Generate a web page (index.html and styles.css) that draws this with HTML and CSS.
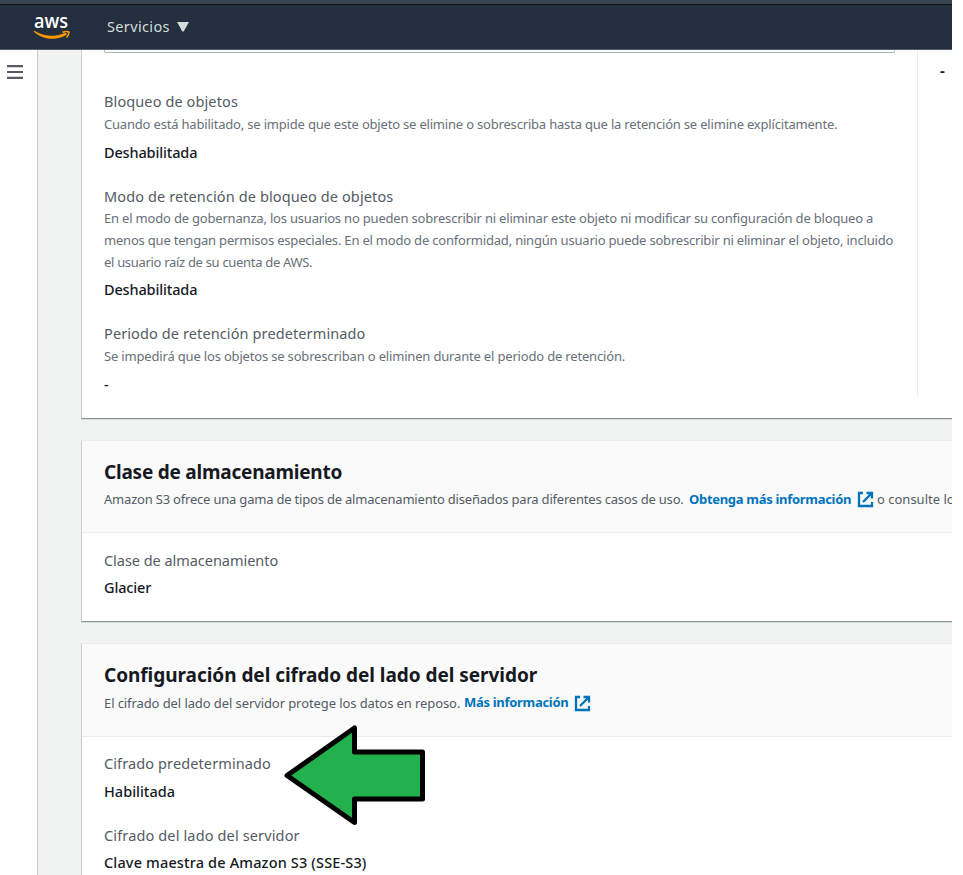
FILE: index.html
```html
<!DOCTYPE html>
<html lang="es">
<head>
<meta charset="utf-8">
<title>Amazon S3</title>
<link rel="stylesheet" href="styles.css">
</head>
<body>
<div class="console">
  <header class="topbar">
    <svg class="logo" width="40" height="36" viewBox="0 -4 40 36">
      <text class="logo-text" x="1" y="15" textLength="34" lengthAdjust="spacingAndGlyphs">aws</text>
      <path d="M1 18.500C10 27 24 27.500 33.500 21.500L32.500 20C23 24.500 11 24.300 1.300 18Z" fill="#ff9900" stroke="#ff9900" stroke-width=".6"/>
      <path d="M29.500 19.200Q34 17.800 36 19Q36 22 33.500 24.500" fill="none" stroke="#ff9900" stroke-width="1.600"/>
    </svg>
    <span class="services">Servicios</span>
    <svg class="caret" width="12" height="10" viewBox="0 0 12 10"><path d="M0 0H12L6.700 9.500H5.300Z" fill="#d5dbdb"/></svg>
  </header>
  <div class="body">
    <nav class="rail">
      <svg width="16" height="14" viewBox="0 0 16 14"><path d="M0 1.200H16M0 7H16M0 12.800H16" stroke="#545b64" stroke-width="2.200"/></svg>
    </nav>
    <main class="main">
      <section class="card lock-card">
        <div class="lock-col">
          <div class="field-end"></div>
          <div class="label l1">Bloqueo de objetos</div>
          <div class="desc d1">Cuando está habilitado, se impide que este objeto se elimine o sobrescriba hasta que la retención se elimine explícitamente.</div>
          <div class="value v1">Deshabilitada</div>
          <div class="label l2">Modo de retención de bloqueo de objetos</div>
          <div class="desc d2">En el modo de gobernanza, los usuarios no pueden sobrescribir ni eliminar este objeto ni modificar su configuración de bloqueo a</div>
          <div class="desc d3">menos que tengan permisos especiales. En el modo de conformidad, ningún usuario puede sobrescribir ni eliminar el objeto, incluido</div>
          <div class="desc d4">el usuario raíz de su cuenta de AWS.</div>
          <div class="value v2">Deshabilitada</div>
          <div class="label l3">Periodo de retención predeterminado</div>
          <div class="desc d5">Se impedirá que los objetos se sobrescriban o eliminen durante el periodo de retención.</div>
          <div class="value v3">-</div>
        </div>
        <div class="side-col">-</div>
      </section>
      <section class="card storage-card">
        <div class="card-head">
          <h2 class="t1">Clase de almacenamiento</h2>
          <p class="row"><span class="s1">Amazon S3 ofrece una gama de tipos de almacenamiento diseñados para diferentes casos de uso.</span><a class="k1">Obtenga más información</a><svg class="ext" width="17" height="17" viewBox="0 0 17 17"><path d="M6 2H2V15H15V11M9.500 2H15V7.500M14.500 2.500L6 11" fill="none" stroke="#0073bb" stroke-width="2.300"/></svg><span class="s2">o consulte los</span></p>
        </div>
        <div class="label l4">Clase de almacenamiento</div>
        <div class="value v4">Glacier</div>
      </section>
      <section class="card crypt-card">
        <div class="card-head">
          <h2 class="t2">Configuración del cifrado del lado del servidor</h2>
          <p class="row"><span class="s3">El cifrado del lado del servidor protege los datos en reposo.</span><a class="k2">Más información</a><svg class="ext" width="17" height="17" viewBox="0 0 17 17"><path d="M6 2H2V15H15V11M9.500 2H15V7.500M14.500 2.500L6 11" fill="none" stroke="#0073bb" stroke-width="2.300"/></svg></p>
        </div>
        <div class="label l5">Cifrado predeterminado</div>
        <div class="value v5">Habilitada</div>
        <div class="label l6">Cifrado del lado del servidor</div>
        <div class="value v6">Clave maestra de Amazon S3 (SSE-S3)</div>
        <svg class="arrow" width="144" height="102" viewBox="0 0 144 102"><path d="M5 51.500L72.500 4V28H140.500V75H72.500V98.500Z" fill="#22b14c" stroke="#000" stroke-width="5" stroke-linejoin="round"/></svg>
      </section>
    </main>
  </div>
</div>
</body>
</html>
```
FILE: styles.css
```css
* { box-sizing: border-box; }
body { margin: 0; background: #fff; font-family: "Noto Sans", "Open Sans", sans-serif; overflow: hidden; }
.console { width: 952px; height: 875px; overflow: hidden; display: flex; flex-direction: column; }
.topbar { height: 50px; flex: none; display: flex; align-items: center; background: #232f3e; border-top: 4px solid #38444f; border-bottom: 1px solid #545b64; box-shadow: inset 0 1px #111; padding-left: 33px; }
.logo { overflow: visible; }
.logo-text { font-family: "Open Sans", sans-serif; font-size: 20px; font-weight: 600; fill: #fff; }
.services { margin: -2px 0 0 34px; width: 64px; color: #d5dbdb; font-size: 14.5px; letter-spacing: .35px; line-height: 22px; white-space: nowrap; }
.caret { margin-left: 6px; }
.body { flex: 1; display: flex; min-height: 0; }
.rail { width: 38px; flex: none; border-right: 1px solid #c5cbcb; padding: 15px 0 0 7px; }
.rail svg { display: block; }
.main { flex: 1; min-width: 0; background: #f1f3f3; padding-left: 43px; }
.card { background: #fff; border-left: 1px solid #c8cecf; position: relative; white-space: nowrap; padding-left: 22px; }
.lock-card { height: 369px; border-bottom: 1px solid #879596; box-shadow: 0 1px #d5dbdb; display: flex; }
.lock-col { width: 814px; height: 346px; flex: none; border-right: 1px solid #eaeded; }
.field-end { width: 791px; height: 3px; border: 1px solid #aab7b8; border-top: 0; border-radius: 0 0 2px 2px; margin-bottom: 37px; }
.side-col { padding: 9px 0 0 22px; font-size: 15px; line-height: 22px; color: #16191f; font-weight: 700; }
.label { font-size: 14.5px; line-height: 22px; color: #545b64; letter-spacing: .11px; }
.desc { font-size: 13px; line-height: 22px; color: #687078; letter-spacing: -.19px; }
.value { font-size: 14.5px; line-height: 22px; color: #16191f; font-weight: 500; letter-spacing: -.15px; }
.d1 { margin-top: 1px; }
.v1 { margin-top: 6px; }
.l2 { margin-top: 22px; }
.d3 { letter-spacing: -.2px; }
.d4 { letter-spacing: -.31px; }
.v2 { margin-top: 5px; }
.l3 { margin-top: 22px; }
.d5 { margin-top: 1px; letter-spacing: -.175px; }
.v3 { margin-top: 6px; }
.card-head { height: 92px; margin-left: -22px; padding: 18px 0 0 22px; background: #fafafa; border-bottom: 1px solid #eaeded; }
.storage-card { margin-top: 21px; height: 182px; border-top: 1px solid #eaeded; border-bottom: 1px solid #879596; box-shadow: 0 1px #d5dbdb; }
.crypt-card { margin-top: 21px; height: 300px; border-top: 1px solid #eaeded; }
.crypt-card .card-head { height: 93px; }
h2 { margin: 0; font-size: 19px; line-height: 26px; font-weight: 700; color: #16191f; }
.t1 { letter-spacing: -.22px; }
.t2 { letter-spacing: -.04px; }
.row { margin: 3px 0 0; height: 22px; display: flex; align-items: center; font-size: 13px; line-height: 22px; color: #545b64; }
.crypt-card .row { margin-top: 4px; }
.row a { color: #0073bb; font-weight: 700; flex: none; letter-spacing: -.3px; }
.row span { flex: none; }
.ext { flex: none; margin-left: 6px; }
.s1 { width: 585px; letter-spacing: -.2px; }
.k1 { width: 162px; }
.s2 { margin-left: 3px; }
.s3 { width: 360px; letter-spacing: -.09px; }
.k2 { width: 104px; position: relative; top: -1px; }
.l4 { margin-top: 16px; letter-spacing: -.04px; }
.v4 { margin-top: 5px; }
.l5 { margin-top: 15px; }
.v5 { margin-top: 6px; letter-spacing: 0; }
.l6 { margin-top: 22px; letter-spacing: .14px; }
.v6 { margin-top: 5px; letter-spacing: .15px; }
.arrow { position: absolute; left: 200px; top: 80px; }
```
